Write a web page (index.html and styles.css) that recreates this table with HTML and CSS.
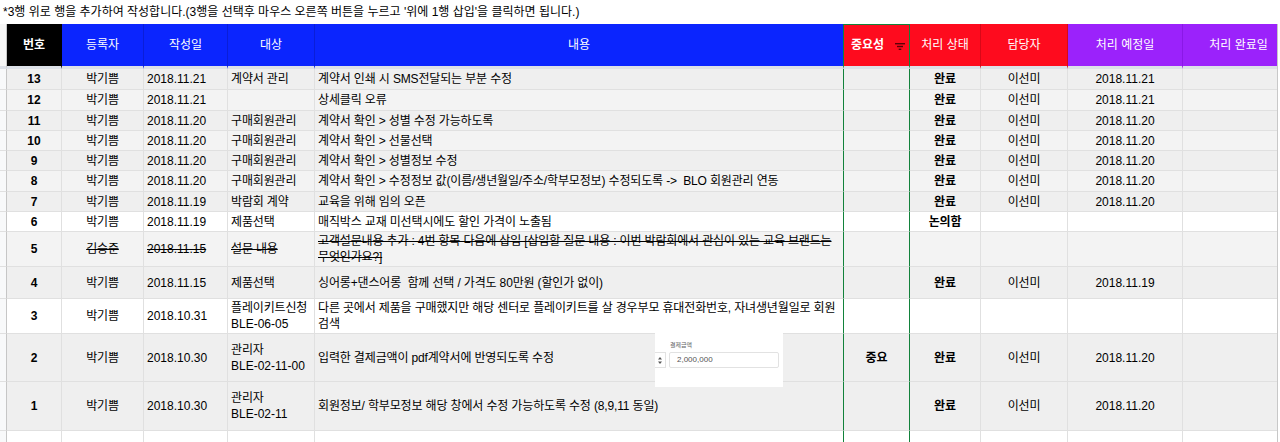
FILE: index.html
```html
<!DOCTYPE html>
<html lang="ko">
<head>
<meta charset="utf-8">
<title>작업 요청 목록</title>
<link rel="stylesheet" href="styles.css">
</head>
<body>
<p class="note">*3행 위로 행을 추가하여 작성합니다.(3행을 선택후 마우스 오른쪽 버튼을 누르고 '위에 1행 삽입'을 클릭하면 됩니다.)</p>
<div class="sheet">
  <div class="grid-wrap">
    <div class="row head">
      <div class="cell gutter"></div>
      <div class="cell hb-black bold ctr">번호</div>
      <div class="cell hb-blue ctr">등록자</div>
      <div class="cell hb-blue ctr">작성일</div>
      <div class="cell hb-blue ctr">대상</div>
      <div class="cell hb-blue ctr green-r">내용</div>
      <div class="cell hb-red imp-head green-r"><span class="bold">중요성</span>
        <svg class="filter" width="10" height="7" viewBox="0 0 10 7"><rect x="0" y="0" width="10" height="1.4" fill="#5c0008"/><rect x="2" y="2.8" width="6" height="1.4" fill="#5c0008"/><rect x="3.7" y="5.6" width="2.6" height="1.4" fill="#5c0008"/></svg>
      </div>
      <div class="cell hb-red ctr">처리 상태</div>
      <div class="cell hb-red ctr">담당자</div>
      <div class="cell hb-purple ctr">처리 예정일</div>
      <div class="cell hb-purple ctr">처리 완료일</div>
    </div>

    <div class="row g1 h21">
      <div class="cell gutter"></div>
      <div class="cell ctr bold lat">13</div>
      <div class="cell ctr">박기쁨</div>
      <div class="cell lat">2018.11.21</div>
      <div class="cell">계약서 관리</div>
      <div class="cell green-r">계약서 인쇄 시 SMS전달되는 부분 수정</div>
      <div class="cell green-r"></div>
      <div class="cell ctr bold">완료</div>
      <div class="cell ctr">이선미</div>
      <div class="cell ctr lat">2018.11.21</div>
      <div class="cell"></div>
    </div>
    <div class="row g2 h21">
      <div class="cell gutter"></div>
      <div class="cell ctr bold lat">12</div>
      <div class="cell ctr">박기쁨</div>
      <div class="cell lat">2018.11.21</div>
      <div class="cell"></div>
      <div class="cell green-r">상세클릭 오류</div>
      <div class="cell green-r"></div>
      <div class="cell ctr bold">완료</div>
      <div class="cell ctr">이선미</div>
      <div class="cell ctr lat">2018.11.21</div>
      <div class="cell"></div>
    </div>
    <div class="row g1 h20">
      <div class="cell gutter"></div>
      <div class="cell ctr bold lat">11</div>
      <div class="cell ctr">박기쁨</div>
      <div class="cell lat">2018.11.20</div>
      <div class="cell">구매회원관리</div>
      <div class="cell green-r">계약서 확인 &gt; 성별 수정 가능하도록</div>
      <div class="cell green-r"></div>
      <div class="cell ctr bold">완료</div>
      <div class="cell ctr">이선미</div>
      <div class="cell ctr lat">2018.11.20</div>
      <div class="cell"></div>
    </div>
    <div class="row g2 h20">
      <div class="cell gutter"></div>
      <div class="cell ctr bold lat">10</div>
      <div class="cell ctr">박기쁨</div>
      <div class="cell lat">2018.11.20</div>
      <div class="cell">구매회원관리</div>
      <div class="cell green-r">계약서 확인 &gt; 선물선택</div>
      <div class="cell green-r"></div>
      <div class="cell ctr bold">완료</div>
      <div class="cell ctr">이선미</div>
      <div class="cell ctr lat">2018.11.20</div>
      <div class="cell"></div>
    </div>
    <div class="row g1 h20">
      <div class="cell gutter"></div>
      <div class="cell ctr bold lat">9</div>
      <div class="cell ctr">박기쁨</div>
      <div class="cell lat">2018.11.20</div>
      <div class="cell">구매회원관리</div>
      <div class="cell green-r">계약서 확인 &gt; 성별정보 수정</div>
      <div class="cell green-r"></div>
      <div class="cell ctr bold">완료</div>
      <div class="cell ctr">이선미</div>
      <div class="cell ctr lat">2018.11.20</div>
      <div class="cell"></div>
    </div>
    <div class="row g2 h21">
      <div class="cell gutter"></div>
      <div class="cell ctr bold lat">8</div>
      <div class="cell ctr">박기쁨</div>
      <div class="cell lat">2018.11.20</div>
      <div class="cell">구매회원관리</div>
      <div class="cell green-r">계약서 확인 &gt; 수정정보 값(이름/생년월일/주소/학부모정보) 수정되도록 -&gt;&nbsp; BLO 회원관리 연동</div>
      <div class="cell green-r"></div>
      <div class="cell ctr bold">완료</div>
      <div class="cell ctr">이선미</div>
      <div class="cell ctr lat">2018.11.20</div>
      <div class="cell"></div>
    </div>
    <div class="row g1 h20">
      <div class="cell gutter"></div>
      <div class="cell ctr bold lat">7</div>
      <div class="cell ctr">박기쁨</div>
      <div class="cell lat">2018.11.19</div>
      <div class="cell">박람회 계약</div>
      <div class="cell green-r">교육을 위해 임의 오픈</div>
      <div class="cell green-r"></div>
      <div class="cell ctr bold">완료</div>
      <div class="cell ctr">이선미</div>
      <div class="cell ctr lat">2018.11.20</div>
      <div class="cell"></div>
    </div>
    <div class="row wh h20">
      <div class="cell gutter"></div>
      <div class="cell ctr bold lat">6</div>
      <div class="cell ctr">박기쁨</div>
      <div class="cell lat">2018.11.19</div>
      <div class="cell">제품선택</div>
      <div class="cell green-r">매직박스 교재 미선택시에도 할인 가격이 노출됨</div>
      <div class="cell green-r"></div>
      <div class="cell ctr bold">논의함</div>
      <div class="cell ctr"></div>
      <div class="cell ctr"></div>
      <div class="cell"></div>
    </div>
    <div class="row g2 h35">
      <div class="cell gutter"></div>
      <div class="cell ctr bold lat">5</div>
      <div class="cell ctr"><span class="del">김승준</span></div>
      <div class="cell lat"><span class="del">2018.11.15</span></div>
      <div class="cell"><span class="del">설문 내용</span></div>
      <div class="cell green-r"><span class="del">고객설문내용 추가 : 4번 항목 다음에 삽입 [삽입할 질문 내용 : 이번 박람회에서 관심이 있는 교육 브랜드는<br>무엇인가요?]</span></div>
      <div class="cell green-r"></div>
      <div class="cell ctr"></div>
      <div class="cell ctr"></div>
      <div class="cell ctr"></div>
      <div class="cell"></div>
    </div>
    <div class="row g1 h32">
      <div class="cell gutter"></div>
      <div class="cell ctr bold lat">4</div>
      <div class="cell ctr">박기쁨</div>
      <div class="cell lat">2018.11.15</div>
      <div class="cell">제품선택</div>
      <div class="cell green-r">싱어롱+댄스어롱&nbsp; 함께 선택 / 가격도 80만원 (할인가 없이)</div>
      <div class="cell green-r"></div>
      <div class="cell ctr bold">완료</div>
      <div class="cell ctr">이선미</div>
      <div class="cell ctr lat">2018.11.19</div>
      <div class="cell"></div>
    </div>
    <div class="row wh h35">
      <div class="cell gutter"></div>
      <div class="cell ctr bold lat">3</div>
      <div class="cell ctr">박기쁨</div>
      <div class="cell lat">2018.10.31</div>
      <div class="cell"><span class="t">플레이키트신청<br><span class="lat">BLE-06-05</span></span></div>
      <div class="cell green-r"><span class="t">다른 곳에서 제품을 구매했지만 해당 센터로 플레이키트를 살 경우부모 휴대전화번호, 자녀생년월일로 회원<br>검색</span></div>
      <div class="cell green-r"></div>
      <div class="cell ctr"></div>
      <div class="cell ctr"></div>
      <div class="cell ctr"></div>
      <div class="cell"></div>
    </div>
    <div class="row g1 h48">
      <div class="cell gutter"></div>
      <div class="cell ctr bold lat">2</div>
      <div class="cell ctr">박기쁨</div>
      <div class="cell lat">2018.10.30</div>
      <div class="cell"><span class="t">관리자<br><span class="lat">BLE-02-11-00</span></span></div>
      <div class="cell green-r">입력한 결제금액이 pdf계약서에 반영되도록 수정</div>
      <div class="cell green-r ctr bold">중요</div>
      <div class="cell ctr bold">완료</div>
      <div class="cell ctr">이선미</div>
      <div class="cell ctr lat">2018.11.20</div>
      <div class="cell"></div>
    </div>
    <div class="row g1 h49">
      <div class="cell gutter"></div>
      <div class="cell ctr bold lat">1</div>
      <div class="cell ctr">박기쁨</div>
      <div class="cell lat">2018.10.30</div>
      <div class="cell"><span class="t">관리자<br><span class="lat">BLE-02-11</span></span></div>
      <div class="cell green-r">회원정보/ 학부모정보 해당 창에서 수정 가능하도록 수정 (8,9,11 동일)</div>
      <div class="cell green-r"></div>
      <div class="cell ctr bold">완료</div>
      <div class="cell ctr">이선미</div>
      <div class="cell ctr lat">2018.11.20</div>
      <div class="cell"></div>
    </div>
    <div class="row wh h30">
      <div class="cell gutter"></div>
      <div class="cell"></div>
      <div class="cell"></div>
      <div class="cell"></div>
      <div class="cell"></div>
      <div class="cell green-r"></div>
      <div class="cell green-r"></div>
      <div class="cell"></div>
      <div class="cell"></div>
      <div class="cell"></div>
      <div class="cell"></div>
    </div>
  </div>
  <div class="edge"></div>

  <div class="shot">
    <div class="shot-label">결제금액</div>
    <div class="shot-fields">
      <div class="shot-spin"><svg width="4" height="7" viewBox="0 0 4 7"><path d="M2 0 L4 2.4 L0 2.4 Z M0 4.6 L4 4.6 L2 7 Z" fill="#555"/></svg></div>
      <div class="shot-input">2,000,000</div>
    </div>
  </div>
</div>
</body>
</html>
```

FILE: styles.css
```css
html, body {
  margin: 0;
  padding: 0;
  background: #fff;
}

body {
  width: 1280px;
  height: 442px;
  overflow: hidden;
  font-family: "Liberation Sans", "Noto Sans CJK KR", sans-serif;
  color: #000;
}

.note {
  margin: 0;
  height: 24px;
  line-height: 24px;
  padding-left: 3px;
  font-size: 12px;
  letter-spacing: 0;
  white-space: nowrap;
}

.sheet {
  position: relative;
  display: flex;
  width: 1280px;
}

.grid-wrap {
  width: 1277px;
  overflow: hidden;
  flex: none;
}

.edge {
  flex: 1;
  border-left: 1px solid #c8c8c8;
  background: #fff;
}

.row {
  display: grid;
  grid-template-columns: 7px 55px 82px 84px 87px 529px 66px 71px 87px 115px 112px;
  width: 1295px;
  font-size: 12px;
  line-height: 16px;
  letter-spacing: -0.15px;
}

.row.head { height: 45px; letter-spacing: 0; }
.h20 { height: 20px; }
.h21 { height: 21px; }
.h30 { height: 30px; }
.h32 { height: 32px; }
.h35 { height: 35px; }
.h48 { height: 48px; }
.h49 { height: 49px; }

.g1 { background: #efefef; }
.g2 { background: #f3f3f3; }
.wh { background: #fff; }

.cell {
  box-sizing: border-box;
  display: flex;
  align-items: center;
  padding: 0 3px;
  border-right: 1px solid #e0e0e0;
  border-bottom: 1px solid #e0e0e0;
  overflow: hidden;
  white-space: nowrap;
}

.cell.ctr {
  justify-content: center;
  text-align: center;
}

.t { display: block; }

.bold { font-weight: bold; }
.lat { letter-spacing: 0; }
.del { text-decoration: line-through; }

.gutter {
  padding: 0;
  background: #f8f9fa;
  border-right: 1px solid #c6c6c6;
}

.cell.green-r { border-right: 1px solid #12823b; }

/* header */
.head .cell {
  color: #fff;
  border-bottom: 3px solid #dde1e8;
}
.head .gutter { background: #f6f6f6; }
.hb-black { background: #000; border-right-color: #000; }
.hb-blue { background: #0b25fe; border-right-color: #0a1ed8; }
.hb-red { background: #fe0b1e; border-right-color: #d80818; }
.hb-purple { background: #9b22fb; border-right-color: #8a18e6; }
.head .cell.green-r { border-right-color: #12823b; }

.imp-head {
  justify-content: space-between;
  padding: 0 4px 0 7px;
  box-shadow: inset 0 1px 0 #12823b;
}

.filter { display: block; margin-top: 2px; }

/* pasted screenshot over row 2 */
.shot {
  position: absolute;
  left: 655px;
  top: 309px;
  width: 128px;
  height: 54px;
  background: #fff;
  box-sizing: border-box;
  padding: 8px 4px 0 0;
}

.shot-label {
  margin-left: 15px;
  font-size: 6px;
  line-height: 8px;
  color: #666;
  letter-spacing: 0;
}

.shot-fields {
  display: flex;
  gap: 3px;
  margin-top: 3px;
}

.shot-spin {
  width: 11px;
  height: 16px;
  box-sizing: border-box;
  border: 1px solid #e2e2e2;
  border-left: none;
  display: flex;
  align-items: center;
  justify-content: flex-end;
  padding-right: 3px;
}

.shot-spin svg { display: block; }

.shot-input {
  flex: 1;
  height: 16px;
  box-sizing: border-box;
  border: 1px solid #e2e2e2;
  border-radius: 2px;
  padding-left: 7px;
  font-size: 8px;
  line-height: 14px;
  color: #555;
}
```
